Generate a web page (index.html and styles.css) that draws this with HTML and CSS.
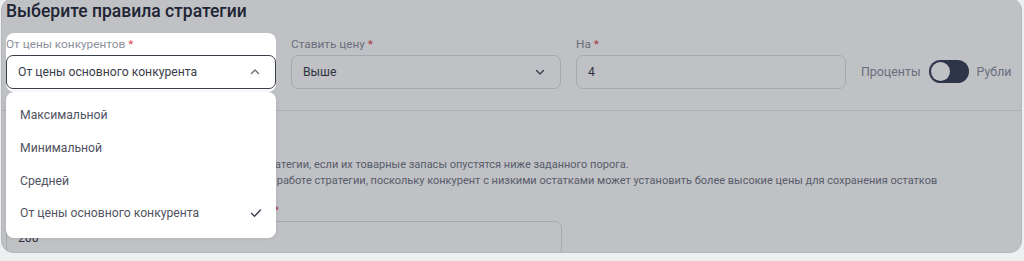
FILE: index.html
```html
<!DOCTYPE html>
<html lang="ru">
<head>
  <meta charset="UTF-8">
  <meta name="viewport" content="width=device-width, initial-scale=1.0">
  <title>Правила стратегии</title>
  <link rel="stylesheet" href="styles.css">
</head>
<body>
  <div class="card">
    <h2 class="title">Выберите правила стратегии</h2>

    <!-- Main pricing rules -->
    <div class="rules-row">
      <div class="field field-spot">
        <label class="field-label">От цены конкурентов <span class="req">*</span></label>
        <div class="select select-open">
          <span>От цены основного конкурента</span>
          <svg class="chevron" width="12" height="12" viewBox="0 0 12 12"><path d="M2.5 7.5L6 4l3.5 3.5" fill="none" stroke="#6b6e7a" stroke-width="1.4" stroke-linecap="round" stroke-linejoin="round"/></svg>
        </div>
        <ul class="dropdown">
          <li>Максимальной</li>
          <li>Минимальной</li>
          <li>Средней</li>
          <li class="selected">
            <span>От цены основного конкурента</span>
            <svg width="14" height="14" viewBox="0 0 14 14"><path d="M2.5 7.3l3 3 6-6.3" fill="none" stroke="#3a3d4a" stroke-width="1.4" stroke-linecap="round" stroke-linejoin="round"/></svg>
          </li>
        </ul>
      </div>

      <div class="field">
        <label class="field-label">Ставить цену <span class="req">*</span></label>
        <div class="select">
          <span>Выше</span>
          <svg class="chevron" width="12" height="12" viewBox="0 0 12 12"><path d="M2.5 4.5L6 8l3.5-3.5" fill="none" stroke="#4a4d59" stroke-width="1.4" stroke-linecap="round" stroke-linejoin="round"/></svg>
        </div>
      </div>

      <div class="field">
        <label class="field-label">На <span class="req">*</span></label>
        <div class="input">4</div>
      </div>

      <div class="switch-group">
        <span>Проценты</span>
        <span class="switch"><span class="knob"></span></span>
        <span>Рубли</span>
      </div>
    </div>

    <div class="divider"></div>

    <!-- Competitor stock rule -->
    <div class="stock">
      <div class="stock-title">Учитывать остатки конкурентов</div>
      <p class="hint">Не учитывать цены конкурентов при расчётах в стратегии, если их товарные запасы опустятся ниже заданного порога.</p>
      <p class="hint">Это поможет избежать ошибок и скачков цены при работе стратегии, поскольку конкурент с низкими остатками может установить более высокие цены для сохранения остатков</p>
    </div>

    <div class="field field-wide">
      <label class="field-label">Минимальный остаток товара у конкурента, шт <span class="req">*</span></label>
      <div class="input">200</div>
    </div>

    <div class="overlay"></div>
  </div>
</body>
</html>
```

FILE: styles.css
```css
body {
  margin: 0;
  background: #eeeff1;
  font-family: Roboto, "Noto Sans", sans-serif;
  color: #3a3d4a;
  overflow: hidden;
}

.card {
  position: relative;
  box-sizing: border-box;
  width: 1021px;
  height: 255px;
  margin: -2px 0 0 1px;
  padding: 2px 0 0 4px;
  background: #fff;
  border: 1px solid #b5b6bb;
  border-radius: 12px;
  overflow: hidden;
}

.title {
  margin: 0;
  font-size: 17.5px;
  line-height: 20px;
  font-weight: 500;
  color: #262938;
}

.rules-row {
  display: flex;
  align-items: flex-start;
  margin-top: 12px;
}

.field {
  flex: none;
  width: 270px;
  margin-right: 15px;
}

.field-label {
  display: block;
  font-size: 11.8px;
  line-height: 22px;
  color: #8c8f9c;
}

.req {
  color: #e5484d;
}

.select,
.input {
  box-sizing: border-box;
  display: flex;
  align-items: center;
  justify-content: space-between;
  height: 34px;
  padding: 0 14px 0 11px;
  border: 1px solid #dcdde2;
  border-radius: 7px;
  font-size: 12.2px;
  color: #3a3d4a;
}

.chevron {
  flex: none;
}

.field-spot {
  position: relative;
  z-index: 6;
  background: #fff;
  border-radius: 8px;
  padding-bottom: 3px;
}

.select-open {
  border-color: #3b3e4b;
}

.dropdown {
  position: absolute;
  left: 0;
  top: 100%;
  width: 270px;
  box-sizing: border-box;
  margin: 0;
  padding: 7px 0 8px;
  list-style: none;
  background: #fff;
  border-radius: 8px;
  box-shadow: 0 0 4px rgba(0, 0, 0, 0.1);
}

.dropdown li {
  display: flex;
  align-items: center;
  justify-content: space-between;
  height: 32.7px;
  padding: 0 13px 0 14px;
  font-size: 12.2px;
  color: #50535f;
}

.switch-group {
  display: flex;
  align-items: center;
  gap: 8px;
  margin-top: 27px;
  font-size: 12.4px;
  color: #8c8f9c;
}

.switch {
  position: relative;
  width: 40px;
  height: 23px;
  border-radius: 12px;
  background: #3a3f56;
}

.knob {
  position: absolute;
  left: 2px;
  top: 2px;
  width: 19px;
  height: 19px;
  border-radius: 50%;
  background: #fff;
}

.divider {
  margin: 18px 0 0 -4px;
  border-top: 1px solid #e4e5e9;
}

.stock {
  margin-top: 16px;
}

.stock-title {
  font-size: 14px;
  line-height: 20px;
  font-weight: 500;
  color: #262938;
  margin-bottom: 10px;
}

.hint {
  margin: 0;
  font-size: 11px;
  line-height: 16px;
  color: #737683;
}

.field-wide {
  width: 556px;
  margin-top: 10px;
}

.overlay {
  position: absolute;
  inset: 0;
  z-index: 5;
  background: rgba(20, 25, 40, 0.27);
}
```
